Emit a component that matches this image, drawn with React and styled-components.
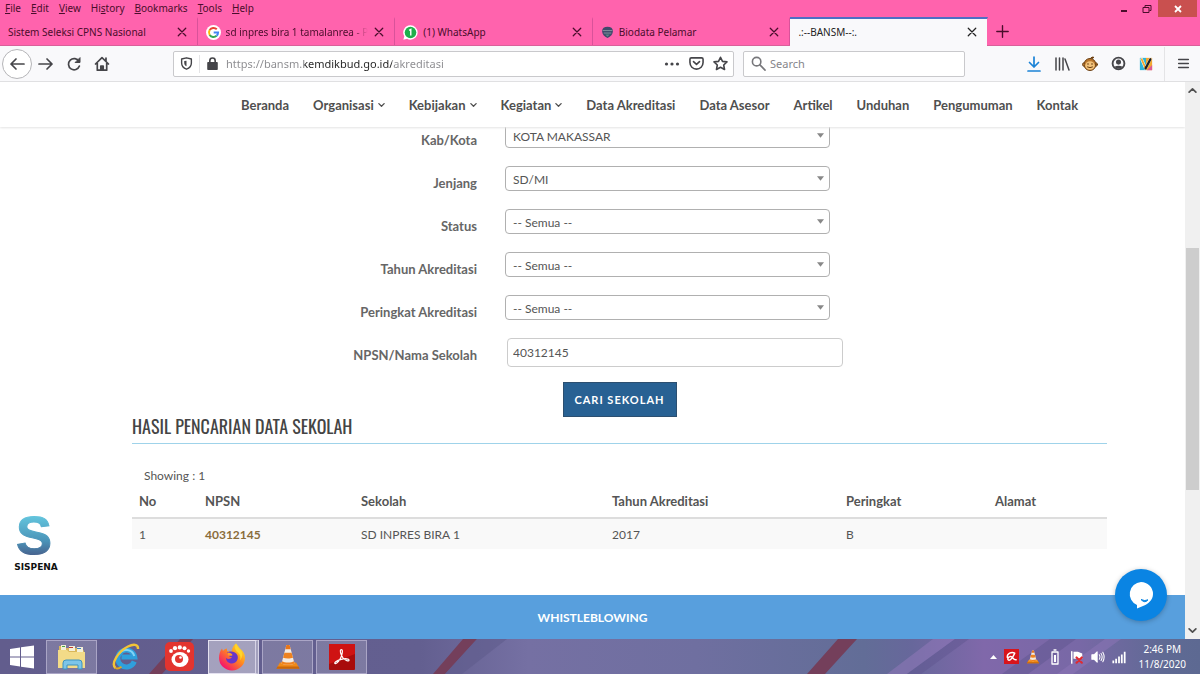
import styled, { createGlobalStyle, css } from "styled-components";

const GlobalStyle = createGlobalStyle`
    * {
        box-sizing: border-box;
    }

    body {
        margin: 0;
        overflow: hidden;
        font-family: "Lato", sans-serif;
        font-size: 12px;
        color: #555;
    }

    button, input, select {
        font-family: inherit;
        margin: 0;
    }

    svg {
        display: block;
        flex-shrink: 0;
    }
`;

const Window = styled.div`
    display: flex;
    flex-direction: column;
    height: 100vh;
    background-color: #fff;
`;

/* browser */

const Chrome = styled.header`
    font-family: "Noto Sans", sans-serif;
    font-size: 11px;
    color: #4a0d2b;
    background-color: #ff63ad;
`;

const TitleBar = styled.div`
    display: flex;
    justify-content: space-between;
    height: 17px;
`;

const MenuBar = styled.nav`
    display: flex;
    gap: 10px;
    padding-left: 5px;
`;

const MenuButton = styled.button`
    border: none;
    background: none;
    padding: 0;
    font-size: 10px;
    line-height: 17px;
    color: inherit;
`;

const WindowButtons = styled.div`
    display: flex;
`;

const WindowButton = styled.button`
    display: flex;
    align-items: center;
    justify-content: center;
    width: ${({ $close }) => ($close ? "39px" : "23px")};
    height: 17px;
    margin-right: ${({ $close }) => ($close ? "3px" : "0")};
    border: none;
    padding: 0;
    background-color: ${({ $close }) => ($close ? "#c9504f" : "transparent")};
`;

const TabBar = styled.div`
    display: flex;
    align-items: stretch;
    height: 29px;
    border-bottom: 1px solid #d9609a;
`;

const Tabs = styled.div`
    display: flex;
    flex: 0 1 988px;
    min-width: 0;
`;

const Tab = styled.div`
    display: flex;
    align-items: center;
    flex: 1;
    min-width: 0;
    gap: 5px;
    padding: 0 9px 0 8px;
    border-top: 2px solid transparent;
    border-right: 1px solid #d9529a;

    ${({ $active }) => $active && css`
        margin-bottom: -1px;
        padding-bottom: 1px;
        border-top-color: #4d6fc4;
        border-right-color: transparent;
        background-color: #f9f9fb;
        background-clip: padding-box;
        color: #222;
    `}
`;

const TabTitle = styled.span`
    flex: 1;
    min-width: 0;
    overflow: hidden;
    white-space: nowrap;
    font-size: 10px;
    ${({ $fade }) => $fade && css`
        mask-image: linear-gradient(to right, #000 calc(100% - 16px), transparent);
    `}
`;

const IconButton = styled.button`
    display: flex;
    align-items: center;
    justify-content: center;
    flex-shrink: 0;
    width: ${({ $size }) => $size || 28}px;
    height: ${({ $size }) => $size || 28}px;
    border: none;
    padding: 0;
    background: none;
    color: inherit;
`;

const ToolBar = styled.div`
    display: flex;
    align-items: center;
    height: 36px;
    padding: 0 3px 0 2px;
    color: #454549;
    background-color: #f9f9fb;
    border-bottom: 1px solid #e0e0e2;
`;

const BackButton = styled(IconButton)`
    border: 1px solid #b5b5b8;
    border-radius: 50%;
    background-color: #fff;
`;

const Field = styled.label`
    display: flex;
    align-items: center;
    height: 26px;
    border: 1px solid #c9c9cc;
    border-radius: 2px;
    background-color: #fff;
    min-width: 0;
`;

const AddressField = styled(Field)`
    flex: 1;
    margin: 0 9px 0 57px;
    padding: 0 1px 0 6px;
`;

const SearchField = styled(Field)`
    flex: 0 1 222px;
    margin-right: 55px;
    padding-left: 7px;
    gap: 4px;
`;

const FieldDivider = styled.span`
    width: 1px;
    height: 18px;
    margin: 0 6px;
    background-color: #e4e4e6;
`;

const FieldInput = styled.input`
    flex: 1;
    min-width: 0;
    border: none;
    padding: 0;
    outline: none;
    background: none;
    font-size: 11px;
    color: #333;

    &::placeholder {
        color: #85858a;
        opacity: 1;
    }
`;

/* the host is darker than the rest of the address */
const AddressInput = styled(FieldInput)`
    margin-left: 7px;
    background: linear-gradient(to right, #8a8a8e 78px, #222 78px 166px, #8a8a8e 166px);
    background-clip: text;
    -webkit-text-fill-color: transparent;
`;

const ToolDivider = styled.span`
    width: 1px;
    height: 34px;
    margin: 0 4px;
    background-color: #e4e4e6;
`;

/* page */

const Viewport = styled.div`
    position: relative;
    display: flex;
    flex: 1;
    min-height: 0;
`;

const Page = styled.div`
    display: flex;
    flex-direction: column;
    flex: 1;
    min-width: 0;
    overflow: hidden;
`;

const SiteNav = styled.nav`
    position: relative;
    z-index: 1;
    display: flex;
    align-items: center;
    flex-shrink: 0;
    gap: 24px;
    height: 45px;
    padding-left: 241px;
    background-color: #fff;
    box-shadow: 0 1px 2px #e4e4e4;
`;

const SiteLink = styled.a`
    display: flex;
    align-items: center;
    gap: 4px;
    font-size: 13px;
    font-weight: 700;
    white-space: nowrap;
    color: #4f4f4f;
    text-decoration: none;
`;

const Main = styled.main`
    margin: -4px 78px 0 132px;
`;

const FormRow = styled.div`
    display: grid;
    grid-template-columns: 373fr 602fr;
    height: 43px;
`;

const FormLabel = styled.label`
    padding: 8px 28px 0 0;
    text-align: right;
    font-size: 13px;
    font-weight: 700;
    line-height: 18px;
    color: #666;
`;

const SelectBox = styled.div`
    position: relative;
    max-width: 325px;
    height: 25px;

    svg {
        position: absolute;
        right: 6px;
        top: 10px;
        pointer-events: none;
    }
`;

const Select = styled.select`
    appearance: none;
    width: 100%;
    height: 25px;
    padding: 2px 7px 0;
    border: 1px solid #b0b0b0;
    border-radius: 4px;
    background-color: #fff;
    font-size: 12px;
    color: #555;
`;

const TextInput = styled.input`
    width: 100%;
    max-width: 336px;
    height: 29px;
    margin: 0 0 0 2px;
    padding: 0 5px;
    border: 1px solid #ccc;
    border-radius: 4px;
    font-size: 12px;
    color: #555;
`;

const SearchButton = styled.button`
    display: block;
    width: 114px;
    height: 35px;
    margin: 1px auto 0;
    border: 1px solid #2c4f70;
    padding: 0;
    background-color: #286193;
    font-size: 11px;
    font-weight: 700;
    letter-spacing: 1px;
    color: #fff;
`;

const Heading = styled.h3`
    margin: 0;
    height: 27px;
    border-bottom: 1px solid #9fd3ea;
    font-family: "Oswald", "Liberation Sans Narrow", "Roboto", sans-serif;
    font-size: 18px;
    font-weight: 400;
    line-height: 18px;
    white-space: nowrap;
    color: #444;
`;

const Showing = styled.p`
    margin: 23px 0 0 12px;
    line-height: 18px;
`;

const Table = styled.table`
    width: 100%;
    table-layout: fixed;
    border-collapse: collapse;
    text-align: left;

    th, td {
        height: 31px;
        padding: 0 7px;
    }

    th {
        height: 33px;
        border-bottom: 2px solid #ddd;
        font-size: 13px;
    }

    td {
        background-color: #f9f9f9;
    }
`;

const Npsn = styled.a`
    font-weight: 700;
    color: #8a6d3b;
    text-decoration: none;
`;

const Footer = styled.footer`
    display: flex;
    align-items: center;
    justify-content: center;
    flex-shrink: 0;
    height: 44px;
    margin-top: auto;
    background-color: #589fdd;

    a {
        font-weight: 700;
        color: #fff;
        text-decoration: none;
    }
`;

const Sispena = styled.a`
    position: absolute;
    left: 12px;
    bottom: 65px;

    svg {
        overflow: visible;
    }
`;

const ChatButton = styled.button`
    position: absolute;
    z-index: 2;
    right: 33px;
    bottom: 18px;
    display: flex;
    align-items: center;
    justify-content: center;
    width: 52px;
    height: 52px;
    border: none;
    border-radius: 50%;
    padding: 0;
    background-color: #0a84e3;
    box-shadow: 0 1px 5px rgba(0, 0, 0, 0.25);
`;

const ScrollBar = styled.div`
    display: flex;
    flex-direction: column;
    align-items: center;
    width: 15px;
    padding: 4px 0;
    background-color: #f0f0f0;
`;

const ScrollTrack = styled.div`
    display: grid;
    grid-template-rows: 153fr 243fr 136fr;
    flex: 1;
    width: 13px;
`;

const ScrollThumb = styled.div`
    grid-row: 2;
    background-color: #cdcdcd;
`;

/* taskbar */

const TaskBar = styled.footer`
    position: relative;
    isolation: isolate;
    display: flex;
    align-items: center;
    justify-content: space-between;
    height: 35px;
    background: linear-gradient(to right, #625d8d, #635f90 35%, #7570a3 44%, #6f6fa0 58%, #626d97 72%, #67679b 76%, #8068aa 82%, #7868a6 90%, #5f6a94 97%, #5d6992);
`;

const Stripes = styled.svg`
    position: absolute;
    z-index: -1;
    width: 100%;
    height: 100%;
`;

const Apps = styled.div`
    display: flex;
    gap: 3px;
`;

const AppButton = styled.button`
    display: flex;
    align-items: center;
    justify-content: center;
    width: ${({ $start }) => ($start ? "43px" : "51px")};
    height: 34px;
    border: 1px solid transparent;
    padding: 0;
    background: none;

    ${({ $open }) => $open && css`
        border-color: #aaa5c6;
        background-color: rgba(255, 255, 255, 0.17);
    `}

    ${({ $front }) => $front && css`
        border-color: #e4e1f0;
        border-right: 4px double #d6d3e6;
        background-color: rgba(255, 255, 255, 0.42);
    `}
`;

const Tray = styled.div`
    display: flex;
    align-items: center;
    gap: 7px;
    padding-right: 14px;
`;

const Clock = styled.time`
    margin-left: 6px;
    font-family: "Noto Sans", sans-serif;
    font-size: 10px;
    line-height: 15px;
    text-align: center;
    color: #fff;
`;

const Svg = ({ size = 16, children, ...rest }) => (
    <svg width={size} height={size} viewBox="0 0 16 16" fill="none" stroke="currentColor" strokeWidth="1.7" strokeLinecap="round" strokeLinejoin="round" aria-hidden="true" {...rest}>
        {children}
    </svg>
);

const CloseIcon = () => <Svg size={10} strokeWidth="2"><path d="M2 2l12 12M14 2L2 14" /></Svg>;

const ChevronDown = () => <Svg size={7} strokeWidth="3"><path d="M2 6l6 6 6-6" /></Svg>;

const Caret = () => (
    <svg width="7" height="5" viewBox="0 0 8 5" aria-hidden="true"><path d="M0 0h8L4 5z" fill="#888" /></svg>
);

const GoogleIcon = () => (
    <svg width="15" height="15" viewBox="0 0 16 16" aria-hidden="true">
        <circle cx="8" cy="8" r="8" fill="#fff" />
        <g fill="none" strokeWidth="2.1">
            <path d="M11.5 4.6A4.9 4.9 0 0 0 3.9 5.4" stroke="#ea4335" />
            <path d="M3.9 5.4a4.9 4.9 0 0 0 0 5.2" stroke="#fbbc05" />
            <path d="M3.9 10.6a4.9 4.9 0 0 0 7.4.9" stroke="#34a853" />
            <path d="M11.3 11.5A4.9 4.9 0 0 0 12.9 8H8.2" stroke="#4285f4" />
        </g>
    </svg>
);

const WhatsAppIcon = () => (
    <svg width="15" height="15" viewBox="0 0 16 16" aria-hidden="true">
        <path d="M8 .3a7.6 7.6 0 0 1 0 15.3c-1.4 0-2.6-.3-3.7-.9L.4 15.7l1-3.8A7.6 7.6 0 0 1 8 .3z" fill="#fff" />
        <circle cx="8" cy="8" r="6.2" fill="#1faf4b" />
        <path d="M6.5 5.8L8.3 4.7V11.3" fill="none" stroke="#fff" strokeWidth="1.5" />
    </svg>
);

const BiodataIcon = () => (
    <svg width="13" height="13" viewBox="0 0 12 12" aria-hidden="true">
        <path d="M1 4.5C1 2 3 .6 6 .6s5 1.4 5 3.9c0 3-2 5-5 6.5-3-1.5-5-3.5-5-6.5z" fill="#3f4a6b" />
        <path d="M1.5 4.2h9M2.500 6.500h7" stroke="#8b9aa3" strokeWidth="0.8" />
        <path d="M4 7.8h4L6 10z" fill="#5b8a86" />
    </svg>
);

const HomeIcon = () => (
    <Svg>
        <path d="M1.5 8L8 1.7 14.5 8M3.3 7v7.2h9.4V7M12 2v3" />
        <path d="M6.8 14v-4h2.4v4" fill="currentColor" />
    </Svg>
);

const ConeIcon = ({ size }) => (
    <svg width={size} height={size} viewBox="0 0 24 24" aria-hidden="true">
        <path d="M4.5 17h15l3 5.5h-21z" fill="#f08a17" />
        <path d="M2.3 20.8h19.4l1 2h-21.4z" fill="#c9670a" />
        <path d="M10.5 1h3l4.5 17c-2 1.5-10 1.5-12 0z" fill="#f4ece2" />
        <path d="M10.5 1h3l1 3.9h-5z" fill="#e8761a" />
        <path d="M8.7 8h6.6l1.3 4.6c-2.5 1-6.7 1-9.2 0z" fill="#ee8220" />
        <path d="M6.5 16l-.6 2c2 1.5 10.2 1.5 12.2 0l-.6-2c-2.5 1.5-8.5 1.5-11 0z" fill="#ee8220" />
    </svg>
);

const ExplorerIcon = () => (
    <svg width="30" height="27" viewBox="0 0 30 27" aria-hidden="true">
        <path d="M2 3h6l1 2h16l2 3v17H2z" fill="#d9b75a" />
        <path d="M4 2h5v5H4zM12 3h6v5h-6zM20 4h6v5h-6z" fill="#f4f0d8" />
        <path d="M5 3h3v1H5z" fill="#4aa548" />
        <path d="M12 4h4v1h-4z" fill="#c0392b" />
        <path d="M20 5h4v1h-4z" fill="#3b82c4" />
        <path d="M1 7h9l2 2h16v16H1z" fill="#f3db88" />
        <path d="M6 26v-6q0-3 3-3h13q3 0 3 3v6h-4v-4H10v4z" fill="#7cc5e8" stroke="#3d93bf" />
    </svg>
);

const IeIcon = () => (
    <svg width="28" height="28" viewBox="0 0 28 28" aria-hidden="true">
        <path d="M22.3 18.5A8.5 8.5 0 1 1 22.7 14H9.5" fill="none" stroke="#2f9fdc" strokeWidth="5" />
        <path d="M22.3 13A8.5 8.5 0 0 0 7 11" fill="none" stroke="#7fd4f7" strokeWidth="2" />
        <path d="M3.5 25C-1.5 21 6 8.5 16 3.5 21 1 26.5 .8 26 6" fill="none" stroke="#f2c437" strokeWidth="2.4" />
        <path d="M3.5 25c1.5 1 4 .2 6-1.2" fill="none" stroke="#e0a91f" strokeWidth="2" />
    </svg>
);

const GomIcon = () => (
    <svg width="29" height="29" viewBox="0 0 29 29" aria-hidden="true">
        <rect width="29" height="29" rx="5" fill="#e3342f" />
        <g fill="#fff">
            <ellipse cx="15" cy="17.5" rx="8.5" ry="7.5" />
            <circle cx="6" cy="9" r="1.9" />
            <circle cx="10" cy="6.2" r="2.1" />
            <circle cx="14.8" cy="5.4" r="2.1" />
            <circle cx="19.5" cy="6.3" r="2" />
            <circle cx="23.5" cy="9" r="1.7" />
        </g>
        <circle cx="14" cy="17" r="4" fill="#e3342f" />
        <circle cx="15.5" cy="15.5" r="1.3" fill="#fff" />
    </svg>
);

const FirefoxIcon = () => (
    <svg width="28" height="28" viewBox="0 0 28 28" aria-hidden="true">
        <defs>
            <linearGradient id="fox" x1="0.9" y1="0.1" x2="0.2" y2="0.9">
                <stop offset="0" stopColor="#ffe226" />
                <stop offset="0.45" stopColor="#ff8a1f" />
                <stop offset="1" stopColor="#f5156c" />
            </linearGradient>
        </defs>
        <path d="M18 .5c2 2 2.5 3.8 4.5 5.5C25.5 8.5 27 11.5 27 15a13 12.5 0 0 1-26 0c0-4 1-7 3-9.5L5 8c1-1.5 2.5-2.3 4-2.5L9 8l4.5 1C14 5 15.5 2.5 18 .5z" fill="url(#fox)" />
        <path d="M9 9.5c3-2 9-1.5 10.5 3 1.3 4-1.5 8-5.5 8-3.5 0-6-2.5-6-5.5 2 1.5 4.5 1 6-.8-2.5 0-3.5-1.2-3-2.7z" fill="#6a35c9" />
        <path d="M10 9.5c2 .2 4 1 4.500 2.500-.8 1-2.500 1-3.500.7C9.500 12 9.500 10.500 10 9.500z" fill="#ff9a2a" />
        <path d="M18 .5c-2 4.500-.5 7 2 9 2.500 2.200 3 5 2 8 3-4 3.500-8-.5-11.500C19.500 4 19 2.500 18 .5z" fill="#ffd52b" />
    </svg>
);

const AcrobatIcon = () => (
    <svg width="26" height="26" viewBox="0 0 26 26" aria-hidden="true">
        <rect width="26" height="26" rx="1" fill="#a80c0c" />
        <path d="M0 0h26v10L0 20z" fill="#cf1313" />
        <path d="M12 5.500c1.800-.3 1.700 3 .5 6.500C11 16 8 20 6.300 19.700c-1.800-.5 1-3.200 6-4.400 4-1 8-.7 7.700 1-.3 1.500-3.500.3-6-2.500-2.300-2.700-3.500-7.500-2-8.300z" fill="none" stroke="#fff" strokeWidth="1.2" />
    </svg>
);

const menus = ["File", "Edit", "View", "Hi-story", "Bookmarks", "Tools", "Help"];

/* the letter after "-" is the access key, the first one otherwise */
const MenuLabel = ({ text }) => {
    const at = text.indexOf("-");
    const name = text.replace("-", "");
    const key = at < 0 ? 0 : at;

    return <>{name.slice(0, key)}<u>{name[key]}</u>{name.slice(key + 1)}</>;
};

const tabs = [
    { title: "Sistem Seleksi CPNS Nasional" },
    { title: "sd inpres bira 1 tamalanrea - Pe", icon: <GoogleIcon />, fade: true },
    { title: "(1) WhatsApp", icon: <WhatsAppIcon /> },
    { title: "Biodata Pelamar", icon: <BiodataIcon /> },
    { title: ".:--BANSM--:.", active: true },
];

const links = [
    { title: "Beranda" },
    { title: "Organisasi", sub: true },
    { title: "Kebijakan", sub: true },
    { title: "Kegiatan", sub: true },
    { title: "Data Akreditasi" },
    { title: "Data Asesor" },
    { title: "Artikel" },
    { title: "Unduhan" },
    { title: "Pengumuman" },
    { title: "Kontak" },
];

const filters = [
    { id: "kota", label: "Kab/Kota", value: "KOTA MAKASSAR" },
    { id: "jenjang", label: "Jenjang", value: "SD/MI" },
    { id: "status", label: "Status", value: "-- Semua --" },
    { id: "tahun", label: "Tahun Akreditasi", value: "-- Semua --" },
    { id: "peringkat", label: "Peringkat Akreditasi", value: "-- Semua --" },
];

const columns = [
    { title: "No", width: 66 },
    { title: "NPSN", width: 156 },
    { title: "Sekolah", width: 251 },
    { title: "Tahun Akreditasi", width: 234 },
    { title: "Peringkat", width: 149 },
    { title: "Alamat", width: 119 },
];

const Browser = () => (
    <Chrome>
        <TitleBar>
            <MenuBar>
                {menus.map((menu) => (
                    <MenuButton key={menu}><MenuLabel text={menu} /></MenuButton>
                ))}
            </MenuBar>

            <WindowButtons>
                <WindowButton aria-label="Minimize">
                    <svg width="8" height="8" viewBox="0 0 8 8"><path d="M1 6h6" stroke="#4a0d2b" strokeWidth="2" /></svg>
                </WindowButton>
                <WindowButton aria-label="Restore">
                    <svg width="10" height="10" viewBox="0 0 10 10" fill="none" stroke="#4a0d2b"><path d="M1 3.500h6v5H1zM3 3V1.500h6v5H7.500" /></svg>
                </WindowButton>
                <WindowButton $close aria-label="Close">
                    <svg width="8" height="8" viewBox="0 0 8 8"><path d="M1 1l6 6M7 1L1 7" stroke="#fff" strokeWidth="1.8" /></svg>
                </WindowButton>
            </WindowButtons>
        </TitleBar>

        <TabBar>
            <Tabs>
                {tabs.map(({ title, icon, fade, active }) => (
                    <Tab key={title} $active={active}>
                        {icon}
                        <TabTitle $fade={fade}>{title}</TabTitle>
                        <IconButton $size={12} aria-label="Close tab"><CloseIcon /></IconButton>
                    </Tab>
                ))}
            </Tabs>
            <IconButton aria-label="New tab">
                <Svg size={13}><path d="M8 1v14M1 8h14" /></Svg>
            </IconButton>
        </TabBar>

        <ToolBar>
            <BackButton $size={30} aria-label="Back"><Svg><path d="M15 8H2M7 3L2 8l5 5" /></Svg></BackButton>
            <IconButton aria-label="Forward"><Svg><path d="M1 8h13M9 3l5 5-5 5" /></Svg></IconButton>
            <IconButton aria-label="Reload">
                <Svg><path d="M13 5.500A5.600 5.600 0 1 0 13.400 10" /><path d="M14 2v4.500H9.500z" fill="currentColor" strokeWidth="1" /></Svg>
            </IconButton>
            <IconButton aria-label="Home"><HomeIcon /></IconButton>

            <AddressField>
                <Svg size={13}><path d="M8 1l6 1.500v5c0 4-3 6.500-6 7.500-3-1-6-3.500-6-7.500v-5z" /><path d="M8 4.500v7c-1.800-.8-2.800-2.200-2.800-4V5z" fill="currentColor" stroke="none" /></Svg>
                <FieldDivider />
                <Svg size={13} strokeWidth="2"><rect x="2.500" y="7" width="11" height="8" fill="currentColor" /><path d="M4.700 7V4.500a3.300 3.300 0 0 1 6.600 0V7" /></Svg>
                <AddressInput aria-label="Address" defaultValue="https://bansm.kemdikbud.go.id/akreditasi" />
                <IconButton $size={24} aria-label="Page actions">
                    <Svg fill="currentColor" stroke="none"><circle cx="2.500" cy="8" r="1.600" /><circle cx="8" cy="8" r="1.600" /><circle cx="13.500" cy="8" r="1.600" /></Svg>
                </IconButton>
                <IconButton $size={24} aria-label="Save to Pocket">
                    <Svg size={15}><path d="M2.500 2h11q1.500 0 1.500 1.500V7a7 7 0 0 1-14 0V3.500Q1 2 2.500 2zM4.800 6L8 9l3.200-3" /></Svg>
                </IconButton>
                <IconButton $size={24} aria-label="Bookmark">
                    <Svg size={15}><path d="M8 1.300l2.100 4.400 4.800.6-3.500 3.300.9 4.800L8 12l-4.300 2.400.9-4.800L1.100 6.300l4.800-.6z" /></Svg>
                </IconButton>
            </AddressField>

            <SearchField>
                <Svg size={15} stroke="#77777b"><circle cx="6" cy="6" r="4.500" /><path d="M9.500 9.500L15 15" /></Svg>
                <FieldInput aria-label="Search" placeholder="Search" />
            </SearchField>

            <IconButton aria-label="Downloads"><Svg stroke="#1b83d6"><path d="M8 1v10M3.500 6.500L8 11l4.500-4.500M2 15h12" /></Svg></IconButton>
            <IconButton aria-label="Library"><Svg><path d="M2 2v12M5.500 2v12M9 2v12M11 3l4 11" strokeWidth="1.500" /></Svg></IconButton>
            <IconButton aria-label="Monkey">
                <Svg stroke="#6b3f12" strokeWidth="1">
                    <path d="M8.500 2.500C9 1 11 .7 12 1.500c-1 0-1.500.7-1.500 1.300" fill="#7a4b18" />
                    <circle cx="2.300" cy="8.500" r="1.800" fill="#e3a356" /><circle cx="13.700" cy="8.500" r="1.800" fill="#e3a356" />
                    <circle cx="8" cy="8.500" r="6" fill="#b9762c" />
                    <ellipse cx="8" cy="9.500" rx="4.800" ry="4.300" fill="#f2c27a" stroke="none" />
                    <path d="M6 7.500v1M10 7.500v1M5.500 11q2.500 1.500 5 0" />
                </Svg>
            </IconButton>
            <IconButton aria-label="Account">
                <Svg size={15}><circle cx="8" cy="8" r="6.300" strokeWidth="2" /><circle cx="8" cy="6.500" r="2.700" fill="currentColor" stroke="none" /><path d="M3.500 11.500q4.500-2 9 0Q8 15.500 3.500 11.500z" fill="currentColor" stroke="none" /></Svg>
            </IconButton>
            <IconButton aria-label="Extension">
                <Svg size={14} stroke="none">
                    <path d="M1 1h7v14H1z" fill="#2fb4d6" /><path d="M8 1h7v14H8z" fill="#f3a72e" /><path d="M9 15l6-6v6z" fill="#dc5b96" />
                    <path d="M3 2.500L7.500 13 13 2.500" fill="none" stroke="#fff" strokeWidth="3" />
                    <path d="M3 2.500L7.500 13" fill="none" stroke="#f3a72e" strokeWidth="2" /><path d="M7.500 13L13 2.500" fill="none" stroke="#222" strokeWidth="2.600" />
                </Svg>
            </IconButton>
            <ToolDivider />
            <IconButton aria-label="Menu"><Svg size={13}><path d="M2 3h12M2 8h12M2 13h12" /></Svg></IconButton>
        </ToolBar>
    </Chrome>
);

const Results = () => (
    <>
        <Heading>HASIL PENCARIAN DATA SEKOLAH</Heading>
        <Showing>Showing : 1</Showing>

        <Table>
            <colgroup>
                {columns.map(({ title, width }) => <col key={title} width={width} />)}
            </colgroup>
            <thead>
                <tr>{columns.map(({ title }) => <th key={title}>{title}</th>)}</tr>
            </thead>
            <tbody>
                <tr>
                    <td>1</td>
                    <td><Npsn href="#40312145">40312145</Npsn></td>
                    <td>SD INPRES BIRA 1</td>
                    <td>2017</td>
                    <td>B</td>
                    <td></td>
                </tr>
            </tbody>
        </Table>
    </>
);

const Site = () => (
    <Viewport>
        <Page>
            <SiteNav>
                {links.map(({ title, sub }) => (
                    <SiteLink key={title} href="#">{title}{sub && <ChevronDown />}</SiteLink>
                ))}
            </SiteNav>

            <Main>
                {filters.map(({ id, label, value }) => (
                    <FormRow key={id}>
                        <FormLabel htmlFor={id}>{label}</FormLabel>
                        <SelectBox>
                            <Select id={id}><option>{value}</option></Select>
                            <Caret />
                        </SelectBox>
                    </FormRow>
                ))}
                <FormRow>
                    <FormLabel htmlFor="npsn">NPSN/Nama Sekolah</FormLabel>
                    <TextInput id="npsn" defaultValue="40312145" />
                </FormRow>
                <SearchButton>CARI SEKOLAH</SearchButton>
                <Results />
            </Main>

            <Footer><a href="#whistleblowing">WHISTLEBLOWING</a></Footer>
        </Page>

        <ScrollBar>
            <Svg size={9} stroke="#505050" strokeWidth="3"><path d="M2 11l6-6 6 6" /></Svg>
            <ScrollTrack><ScrollThumb /></ScrollTrack>
            <Svg size={9} stroke="#505050" strokeWidth="3"><path d="M2 5l6 6 6-6" /></Svg>
        </ScrollBar>

        <Sispena href="#sispena">
            <svg width="50" height="62" viewBox="0 0 50 62">
                <defs>
                    <linearGradient id="sispena" x1="0" y1="0" x2="0" y2="1">
                        <stop offset="0.2" stopColor="#62c3dc" />
                        <stop offset="0.6" stopColor="#4a93b8" />
                        <stop offset="0.85" stopColor="#47608c" />
                    </linearGradient>
                </defs>
                <text x="22" y="42" textAnchor="middle" fontFamily="Liberation Sans, sans-serif" fontWeight="700" fontSize="54" fill="url(#sispena)" stroke="url(#sispena)">S</text>
                <text x="24" y="58" textAnchor="middle" fontFamily="DejaVu Sans, sans-serif" fontWeight="700" fontSize="9" fill="#111">SISPENA</text>
            </svg>
        </Sispena>

        <ChatButton aria-label="Chat">
            <svg width="26" height="28" viewBox="0 0 26 28">
                <path d="M13 1a12 12 0 0 1 12 12c0 6-5 10-10 12l-6 2.500V24A12 12 0 0 1 13 1z" fill="#fff" />
                <path d="M13 18.500q4 2 7 .3-3 4-7-.3z" fill="#0a84e3" stroke="#0a84e3" />
            </svg>
        </ChatButton>
    </Viewport>
);

const Desktop = () => (
    <TaskBar>
        <Stripes viewBox="0 0 1200 35" preserveAspectRatio="none" aria-hidden="true">
            <path d="M180 0h13l-31 35h-13zM463 0h14l-32 35h-12zM838 0h19l-32 35h-18z" fill="#743f5b" />
            <path d="M477 0h30l-45 35h-17z" fill="#5f5b8c" opacity="0.6" />
            <path d="M933 0h22l-48 35h-20z" fill="#9379bb" opacity="0.5" />
            <path d="M955 0h14l-48 35h-14zM1050 0h26l-48 35h-26z" fill="#5f568f" opacity="0.5" />
            <path d="M1105 0h16l-48 35h-16z" fill="#8e76b8" opacity="0.5" />
        </Stripes>

        <Apps>
            <AppButton $start aria-label="Start">
                <svg width="24" height="24" viewBox="0 0 24 24" fill="#fff"><path d="M0 4l10-1.500v9H0zM11 2.300L24 .5v11H11zM0 12.500h10v9L0 20zM11 12.500h13v11l-13-1.800z" /></svg>
            </AppButton>
            <AppButton $open aria-label="File Explorer"><ExplorerIcon /></AppButton>
            <AppButton aria-label="Internet Explorer"><IeIcon /></AppButton>
            <AppButton aria-label="GOM Player"><GomIcon /></AppButton>
            <AppButton $open $front aria-label="Firefox"><FirefoxIcon /></AppButton>
            <AppButton $open aria-label="VLC"><ConeIcon size={26} /></AppButton>
            <AppButton $open aria-label="Acrobat"><AcrobatIcon /></AppButton>
        </Apps>

        <Tray>
            <svg width="7" height="4" viewBox="0 0 7 4" aria-hidden="true"><path d="M0 4l3.500-4L7 4z" fill="#fff" /></svg>
            <Svg size={15} stroke="#fff"><rect width="16" height="16" fill="#d8141c" stroke="none" /><path d="M3.500 9C3 5 8 2.500 11.500 4.500 10 7.500 8 12 5.500 12 3 12 4 8.500 7 8c2.500-.3 2.500 4 6 3.500" strokeWidth="1.500" /></Svg>
            <ConeIcon size={14} />
            <Svg stroke="#fff" strokeWidth="1.300"><path d="M5 3h6v12H5zM7 1h2" /><path d="M7 6h2v7H7z" fill="#fff" stroke="none" /></Svg>
            <Svg size={14} stroke="#fff"><path d="M2 2v13" /><path d="M4 2h5l5 2v6H4z" fill="#fff" stroke="none" /><path d="M7.500 8.500l6 6M13.500 8.500l-6 6" stroke="#df2b32" strokeWidth="2.500" /></Svg>
            <Svg size={14} stroke="#fff" strokeWidth="1.200"><path d="M1 5.500h2.500L7 2v12L3.500 10.500H1z" fill="#fff" /><path d="M9.500 5.500q1.500 2.500 0 5M11.500 4q2.500 4 0 8M13.500 2.500q3 5.500 0 11" /></Svg>
            <Svg size={14} stroke="#fff" strokeWidth="2" strokeLinecap="butt"><path d="M1.500 12v3M4.700 10v5M8 7.500V15M11.200 5v10M14.500 2v13" /></Svg>
            <Clock>2:46 PM<br />11/8/2020</Clock>
        </Tray>
    </TaskBar>
);

const App = () => {
    return (
        <Window>
            <GlobalStyle />
            <Browser />
            <Site />
            <Desktop />
        </Window>
    )
};

export default App;
